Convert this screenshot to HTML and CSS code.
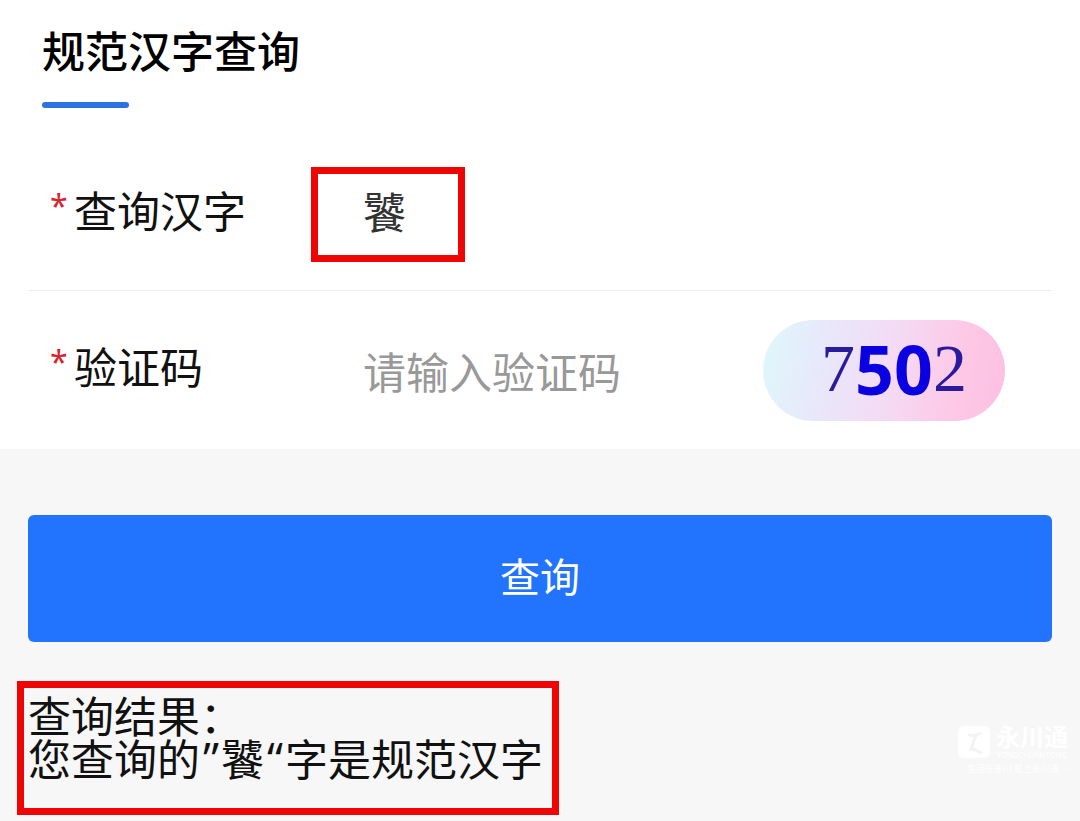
FILE: index.html
```
<!DOCTYPE html>
<html lang="zh-CN">
<head>
  <meta charset="UTF-8" />
  <meta name="viewport" content="width=device-width, initial-scale=1.0"/>
  <title>规范汉字查询</title>
  <link rel="stylesheet" href="styles.css">
</head>
<body>
  <form class="query-form">
    <div class="card">
      <h1 class="title">规范汉字查询</h1>
      <div class="row">
        <label class="label" for="hanzi"><span class="required">*</span>查询汉字</label>
        <input class="field marked" id="hanzi" type="text" value="饕" />
      </div>
      <div class="row">
        <label class="label" for="code"><span class="required">*</span>验证码</label>
        <input class="field code" id="code" type="text" placeholder="请输入验证码" />
        <div class="captcha"><span>7</span><b>50</b><span>2</span></div>
      </div>
    </div>
    <button class="btn" type="button">查询</button>
  </form>
  <div class="result">
    <p>查询结果：</p>
    <p>您查询的<span class="quote">”</span>饕<span class="quote">“</span>字是规范汉字</p>
  </div>
  <div class="watermark">
    <div class="brand">
      <svg width="32" height="32" viewBox="0 0 32 32">
        <rect width="32" height="32" rx="6" fill="#fff"/>
        <path d="M10 8c3 3 7 2 13-1M18 9l-5 14c3 0 6 1 8 3l3 1" fill="none" stroke="#f3f3f3" stroke-width="3"/>
      </svg>
      <div>
        <div class="brand-name">永川通</div>
        <div class="brand-url">YONGCHUANTONG</div>
      </div>
    </div>
    <div class="slogan">— 生活在永川 就上永川通 —</div>
  </div>
</body>
</html>
```
FILE: styles.css
```
body {
  position: relative;
  margin: 0;
  min-height: 100vh;
  background-color: #f7f7f7;
  color: #111;
  font-family: "Noto Sans CJK SC", sans-serif;
  font-size: 43px;
  line-height: 43px;
}
.card {
  padding: 0 28px;
  background-color: #fff;
}
.title {
  margin: 0;
  padding: 28px 14px 31px;
  color: #000;
  font-size: 43px;
  font-weight: 500;
}
.title::after {
  content: "";
  display: block;
  width: 87px;
  height: 6px;
  margin-top: 31px;
  border-radius: 3px;
  background-color: #2e72e0;
}
.row {
  display: flex;
  align-items: center;
  padding: 28px 0;
}
.row + .row {
  padding-top: 29px;
  border-top: 1px solid #eee;
}
.label {
  display: flex;
  flex: none;
  box-sizing: border-box;
  width: 283px;
  padding: 0 0 10px 22px;
}
.required {
  width: 24px;
  color: #d9232e;
  font-family: "Noto Sans", sans-serif;
  font-size: 32px;
  line-height: 36px;
}
.field {
  box-sizing: border-box;
  min-width: 0;
  margin: 0;
  border: 0;
  background: none;
  color: #333;
  font: inherit;
  outline: none;
}
.marked {
  width: 154px;
  height: 95px;
  padding: 0 0 10px 45px;
  border: 7px solid #f00505;
}
.code {
  flex: 1;
  height: 64px;
  padding: 0 0 2px 52px;
}
.code::placeholder {
  color: #999;
  opacity: 1;
}
.captcha {
  display: flex;
  flex: none;
  align-items: center;
  justify-content: center;
  box-sizing: border-box;
  width: 242px;
  height: 101px;
  margin-right: 47px;
  padding: 0 0 4px 20px;
  border-radius: 51px;
  background: linear-gradient(100deg, #def8fb 0%, #e8e8fa 25%, #f3dcf5 50%, #fdc8e6 80%, #fdbfe2 100%);
  color: #2a1a9c;
  font-family: "Liberation Serif", serif;
  font-size: 68px;
}
.captcha b {
  color: #0a00e0;
  font-family: "Open Sans", sans-serif;
}
.btn {
  display: block;
  width: calc(100% - 56px);
  height: 127px;
  margin: 66px 28px 39px;
  padding: 0 0 8px;
  border: 0;
  border-radius: 6px;
  background-color: #2274ff;
  color: #fff;
  font-family: inherit;
  font-size: 40px;
  cursor: pointer;
}
.result {
  box-sizing: border-box;
  width: fit-content;
  min-height: 134px;
  margin-left: 17px;
  padding: 5px 9px 29px 4px;
  border: 7px solid #f00505;
}
.result p {
  margin: 0;
}
.quote {
  padding: 0 2px 0 3px;
  font-family: "Open Sans", sans-serif;
  font-size: 46px;
  line-height: 1px;
}
.watermark {
  position: absolute;
  right: 10px;
  bottom: 44px;
  color: #fff;
  text-align: center;
}
.brand {
  display: flex;
  align-items: center;
  justify-content: center;
  gap: 6px;
}
.brand-name {
  font-size: 24px;
  font-weight: bold;
  line-height: 26px;
}
.brand-url {
  font-size: 8px;
  line-height: 12px;
}
.slogan {
  font-size: 9px;
  line-height: 16px;
}
```
